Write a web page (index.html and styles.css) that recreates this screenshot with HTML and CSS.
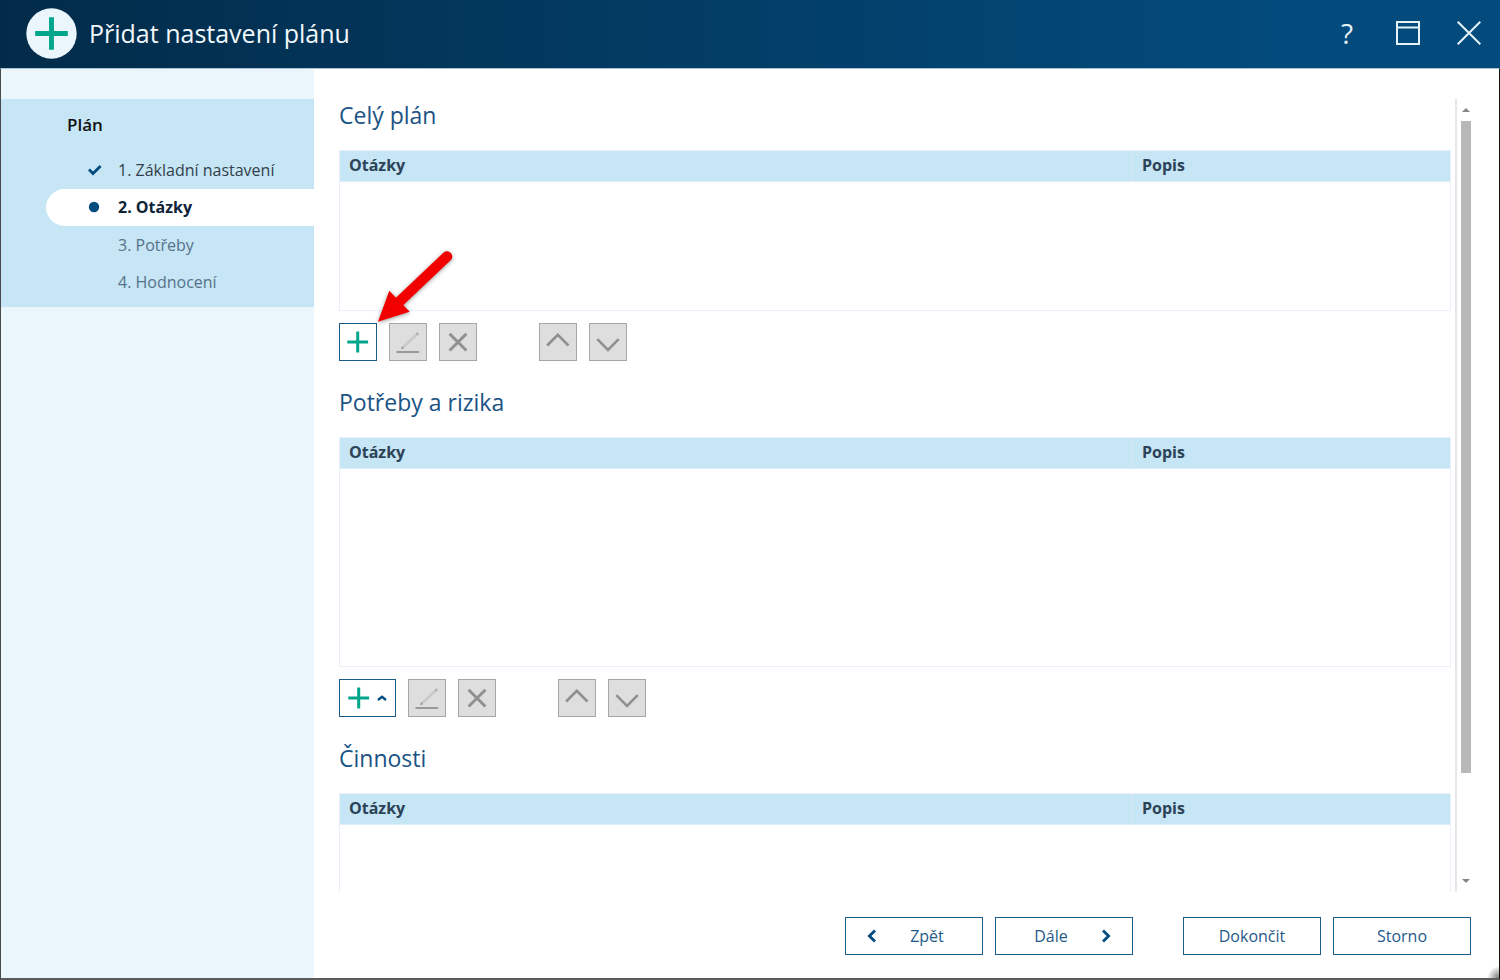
FILE: index.html
```html
<!DOCTYPE html>
<html lang="cs">
<head>
    <meta charset="UTF-8">
    <meta name="viewport" content="width=device-width, initial-scale=1.0">
    <title>Přidat nastavení plánu</title>
    <link rel="stylesheet" href="styles.css">
</head>
<body>
    <!-- Shared icons -->
    <svg class="icon-defs" aria-hidden="true">
        <symbol id="icon-plus" viewBox="0 0 36 36">
            <path d="M17.7 7.6v20.8M7.3 18h20.8" fill="none" stroke="#00a68c" stroke-width="3"/>
        </symbol>
        <symbol id="icon-edit" viewBox="0 0 36 36">
            <path d="M13 23.4L26 11" fill="none" stroke="#c8c8c8" stroke-width="2.6"/>
            <path d="M11 25.2l1-3.2 2.2 2.2z" fill="#999"/>
            <circle cx="27.2" cy="10" r="1.6" fill="#b0b0b0"/>
            <path d="M6.5 28h22.6" fill="none" stroke="#999" stroke-width="2"/>
        </symbol>
        <symbol id="icon-remove" viewBox="0 0 36 36">
            <path d="M9.6 9.7l16.8 16.8M26.4 9.7L9.6 26.5" fill="none" stroke="#909090" stroke-width="3"/>
        </symbol>
        <symbol id="icon-up" viewBox="0 0 36 36">
            <path d="M7.1 21.5L17.8 10.8l10.7 10.7" fill="none" stroke="#8f8f8f" stroke-width="2.6"/>
        </symbol>
        <symbol id="icon-down" viewBox="0 0 36 36">
            <path d="M7.3 15.2L18 25.9l10.7-10.7" fill="none" stroke="#8f8f8f" stroke-width="2.6"/>
        </symbol>
    </svg>

    <div class="window">
        <header class="titlebar">
            <svg class="title-icon" viewBox="0 0 50 50" aria-hidden="true">
                <circle cx="25" cy="25" r="24.7" fill="#ebf5fc"/>
                <path d="M25 9v32M9 25h32" fill="none" stroke="#00a68c" stroke-width="4.8" stroke-linecap="butt"/>
            </svg>
            <h1>Přidat nastavení plánu</h1>
            <div class="window-controls">
                <button type="button" class="control" aria-label="Nápověda">?</button>
                <button type="button" class="control" aria-label="Maximalizovat">
                    <svg viewBox="0 0 24 24"><path d="M1 1h22v22H1zM1 6.5h22" fill="none" stroke="#e6f1f8" stroke-width="2"/></svg>
                </button>
                <button type="button" class="control" aria-label="Zavřít">
                    <svg viewBox="0 0 24 24"><path d="M.7.7l22.6 22.6M23.3.7L.7 23.3" fill="none" stroke="#e6f1f8" stroke-width="2"/></svg>
                </button>
            </div>
        </header>

        <div class="body">
            <nav class="sidebar">
                <div class="steps">
                    <h2>Plán</h2>
                    <ol>
                        <li class="done">
                            <svg viewBox="0 0 14 12" aria-hidden="true"><path d="M1 5.5l4 4L12.6 2" fill="none" stroke="#034c80" stroke-width="2.8"/></svg>
                            <a href="#zaklad">1. Základní nastavení</a>
                        </li>
                        <li class="active">
                            <svg viewBox="0 0 14 12" aria-hidden="true"><circle cx="6" cy="6" r="5.2" fill="#034c80"/></svg>
                            <a href="#otazky">2. Otázky</a>
                        </li>
                        <li><a href="#potreby">3. Potřeby</a></li>
                        <li><a href="#hodnoceni">4. Hodnocení</a></li>
                    </ol>
                </div>
            </nav>

            <div class="main">
                <div class="scroll-area">
                    <main class="content">
                        <section>
                            <h2>Celý plán</h2>
                            <table class="grid">
                                <thead>
                                    <tr><th>Otázky</th><th class="col-desc">Popis</th></tr>
                                </thead>
                                <tbody>
                                    <tr><td colspan="2" class="empty"></td></tr>
                                </tbody>
                            </table>
                            <div class="toolbar">
                                <div class="add-wrap">
                                    <button type="button" class="tool add" aria-label="Přidat"><svg><use href="#icon-plus"/></svg></button>
                                    <svg class="pointer" viewBox="0 0 90 84" aria-hidden="true">
                                        <path d="M77 10.5L29 56" fill="none" stroke="#f20000" stroke-width="10.5" stroke-linecap="round"/>
                                        <path d="M8 75.7L19.3 44.7 39.7 65.7z" fill="#f20000"/>
                                    </svg>
                                </div>
                                <button type="button" class="tool" aria-label="Upravit" disabled><svg><use href="#icon-edit"/></svg></button>
                                <button type="button" class="tool" aria-label="Odebrat" disabled><svg><use href="#icon-remove"/></svg></button>
                                <button type="button" class="tool move-first" aria-label="Nahoru" disabled><svg><use href="#icon-up"/></svg></button>
                                <button type="button" class="tool" aria-label="Dolů" disabled><svg><use href="#icon-down"/></svg></button>
                            </div>
                        </section>

                        <section>
                            <h2>Potřeby a rizika</h2>
                            <table class="grid">
                                <thead>
                                    <tr><th>Otázky</th><th class="col-desc">Popis</th></tr>
                                </thead>
                                <tbody>
                                    <tr><td colspan="2" class="empty tall"></td></tr>
                                </tbody>
                            </table>
                            <div class="toolbar">
                                <button type="button" class="tool add split" aria-label="Přidat">
                                    <svg><use href="#icon-plus"/></svg>
                                    <svg class="caret" viewBox="0 0 10 6"><path d="M1 5l4-3.2L9 5" fill="none" stroke="#034c80" stroke-width="2.4"/></svg>
                                </button>
                                <button type="button" class="tool" aria-label="Upravit" disabled><svg><use href="#icon-edit"/></svg></button>
                                <button type="button" class="tool" aria-label="Odebrat" disabled><svg><use href="#icon-remove"/></svg></button>
                                <button type="button" class="tool move-first" aria-label="Nahoru" disabled><svg><use href="#icon-up"/></svg></button>
                                <button type="button" class="tool" aria-label="Dolů" disabled><svg><use href="#icon-down"/></svg></button>
                            </div>
                        </section>

                        <section>
                            <h2>Činnosti</h2>
                            <table class="grid">
                                <thead>
                                    <tr><th>Otázky</th><th class="col-desc">Popis</th></tr>
                                </thead>
                                <tbody>
                                    <tr><td colspan="2" class="empty"></td></tr>
                                </tbody>
                            </table>
                        </section>
                    </main>
                    <div class="scrollbar" aria-hidden="true">
                        <svg viewBox="0 0 8 4"><path d="M0 4l4-4 4 4z" fill="#858585"/></svg>
                        <div class="track"><div class="thumb"></div></div>
                        <svg viewBox="0 0 8 4"><path d="M0 0l4 4 4-4z" fill="#858585"/></svg>
                    </div>
                </div>

                <footer class="actions">
                    <button type="button" class="btn btn-back">
                        <svg viewBox="0 0 10 14" aria-hidden="true"><path d="M8 1.5L2.4 7 8 12.5" fill="none" stroke="#034c80" stroke-width="2.8"/></svg>
                        <span>Zpět</span>
                    </button>
                    <button type="button" class="btn btn-next">
                        <span>Dále</span>
                        <svg viewBox="0 0 10 14" aria-hidden="true"><path d="M2 1.5L7.6 7 2 12.5" fill="none" stroke="#034c80" stroke-width="2.8"/></svg>
                    </button>
                    <button type="button" class="btn btn-finish">Dokončit</button>
                    <button type="button" class="btn">Storno</button>
                </footer>
            </div>
        </div>
    </div>
</body>
</html>
```

FILE: styles.css
```css
* {
    box-sizing: border-box;
}
body {
    margin: 0;
    font-family: "Open Sans", "Noto Sans", sans-serif;
    font-size: 16px;
    color: #2b4257;
}
h1, h2, ol {
    margin: 0;
    padding: 0;
    font-weight: normal;
}
button {
    font-family: inherit;
    padding: 0;
    cursor: pointer;
}
button:disabled {
    cursor: default;
}
.icon-defs {
    display: none;
}
.window {
    display: flex;
    flex-direction: column;
    height: 100vh;
}

/* Title bar */
.titlebar {
    display: flex;
    align-items: center;
    flex: none;
    height: 68px;
    padding: 0 1px 2px 26px;
    background: linear-gradient(to right, #022b49, #034b7c 85%, #034b7c);
    color: #f2f8fc;
}
.title-icon {
    width: 51px;
    height: 51px;
    margin-right: 12px;
}
.titlebar h1 {
    font-size: 25px;
    line-height: 34px;
}
.window-controls {
    display: flex;
    gap: 1px;
    margin-left: auto;
}
.control {
    display: flex;
    align-items: center;
    justify-content: center;
    width: 60px;
    height: 60px;
    border: none;
    background: none;
    color: #e6f1f8;
    font-size: 28px;
}
.control svg {
    width: 24px;
    height: 24px;
}

/* Body */
.body {
    display: flex;
    flex: 1;
    min-height: 0;
    border: 1px solid #4a4a4a;
    border-top-color: #a9c2d3;
    border-right-color: #111;
    border-bottom: 2px solid #5c5c5c;
    background: radial-gradient(circle at 100% 100%, #777, #fff 12px);
}
.sidebar {
    flex: none;
    width: 313px;
    padding-top: 30px;
    background-color: #eaf5fc;
}
.steps {
    padding: 10px 0 6px 45px;
    background-color: #c6e5f5;
}
.steps h2 {
    padding-left: 21px;
    margin-bottom: 10px;
    font-size: 17px;
    font-weight: 600;
    line-height: 32px;
    color: #111;
}
.steps ol {
    display: flex;
    flex-direction: column;
    height: 150px;
    list-style: none;
}
.steps li {
    position: relative;
    display: flex;
    align-items: center;
    flex: 1;
    padding-left: 72px;
}
.steps li svg {
    position: absolute;
    left: 42px;
    width: 14px;
    height: 12px;
}
.steps a {
    color: #56728a;
    text-decoration: none;
}
.steps .done a {
    color: #333f4a;
}
.steps .active {
    background-color: #fff;
    border-radius: 19px 0 0 19px;
}
.steps .active a {
    color: #0c2338;
    font-weight: bold;
}

/* Main area */
.main {
    display: flex;
    flex-direction: column;
    flex: 1;
    min-width: 0;
    padding: 30px 28px 23px 25px;
}
.scroll-area {
    display: flex;
    flex: 1;
    min-height: 0;
}
.content {
    flex: 1;
    overflow: hidden;
    padding-right: 4px;
    border-right: 2px solid #e6e6e6;
}
section {
    margin-bottom: 25px;
}
section h2 {
    margin-bottom: 19px;
    font-size: 23px;
    line-height: 32px;
    color: #1a5384;
}
.grid {
    width: 100%;
    border: 1px solid #e9f0fa;
    border-spacing: 0;
    table-layout: fixed;
}
.grid th {
    height: 31px;
    padding: 0 9px 2px;
    background-color: #c6e5f5;
    border-bottom: 1px solid #dfedf9;
    text-align: left;
    line-height: 24px;
}
.grid .col-desc {
    width: 318px;
    border-left: 1px solid #d9e6f6;
}
.grid .empty {
    height: 128px;
    padding: 0;
}
.grid .tall {
    height: 197px;
}

/* Toolbars */
.toolbar {
    display: flex;
    gap: 12px;
    margin-top: 12px;
}
.add-wrap {
    position: relative;
    display: flex;
}
.tool {
    display: flex;
    align-items: center;
    width: 38px;
    height: 38px;
    border: 1px solid #a6a6a6;
    background-color: #dedede;
}
.tool svg {
    flex: none;
    width: 36px;
    height: 36px;
}
.tool.add {
    border-color: #1a5c8c;
    background-color: #fff;
}
.tool.split {
    width: 57px;
    padding-left: 1px;
}
.tool .caret {
    width: 10px;
    height: 6px;
}
.move-first {
    margin-left: 50px;
}
.pointer {
    position: absolute;
    left: 31px;
    bottom: 31px;
    width: 90px;
    height: 84px;
    filter: drop-shadow(0 1px 2px rgba(0, 0, 0, 0.4));
}

/* Scrollbar */
.scrollbar {
    display: flex;
    flex-direction: column;
    align-items: center;
    width: 10px;
    margin: 9px 0 9px 4px;
}
.scrollbar svg {
    width: 8px;
    height: 4px;
}
.track {
    flex: 1;
    width: 100%;
    margin: 9px 0;
}
.thumb {
    height: 87%;
    background-color: #b8b8b8;
}

/* Footer buttons */
.actions {
    display: flex;
    justify-content: flex-end;
    gap: 12px;
    padding-top: 25px;
}
.btn {
    display: flex;
    align-items: center;
    justify-content: center;
    width: 138px;
    height: 38px;
    border: 1px solid #1a5c8c;
    background-color: #fff;
    color: #1f598a;
    font-size: 16px;
}
.btn svg {
    width: 10px;
    height: 14px;
}
.btn span {
    flex: 1;
}
.btn-back {
    padding: 0 5px 0 21px;
}
.btn-next {
    padding: 0 21px 0 5px;
}
.btn-finish {
    margin-left: 38px;
}
```
